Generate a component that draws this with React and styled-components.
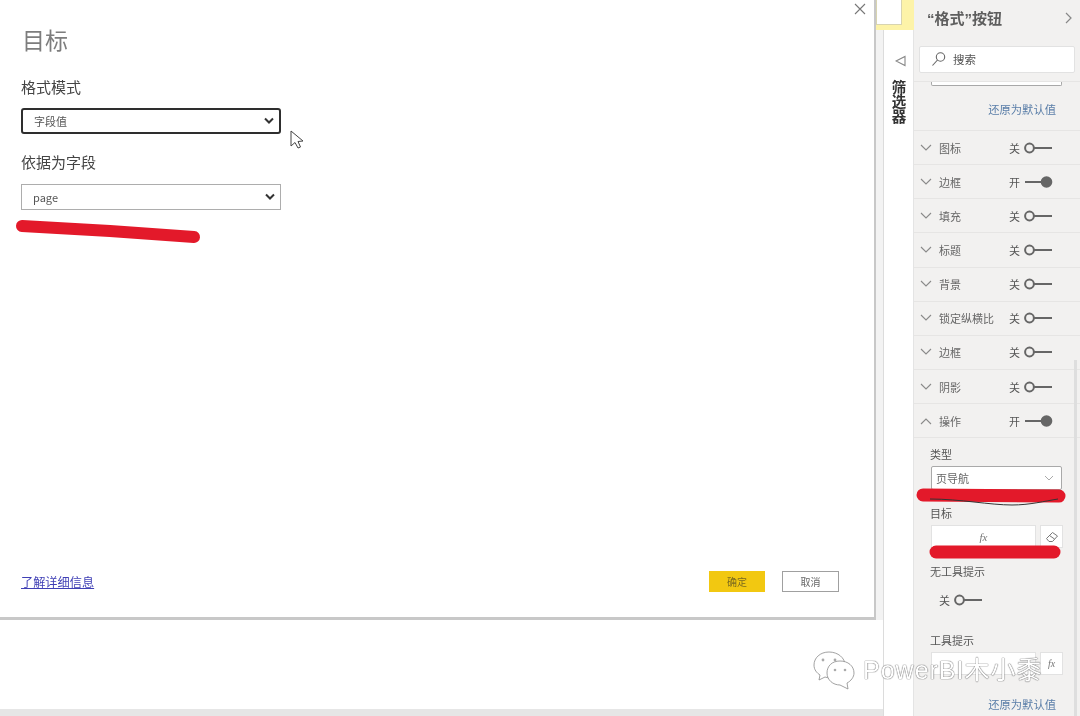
import React from "react";
import styled, { createGlobalStyle } from "styled-components";

const Global = createGlobalStyle`
  html, body { margin: 0; padding: 0; background: #fff; }
  * { box-sizing: border-box; }
  body { font-family: "Noto Sans CJK SC", "Liberation Sans", sans-serif; }
`;

const Page = styled.div`
  position: relative;
  width: 1080px;
  height: 716px;
  overflow: hidden;
  display: flex;
  background: #fff;
  filter: blur(0.5px);
`;

const Canvas = styled.div`
  width: 884px;
  display: flex;
  flex-direction: column;
  border-right: 1px solid #dcdcdc;
`;

const CanvasTop = styled.div`
  height: 620px;
  display: flex;
  background: #f0f0f0;
`;

const Modal = styled.div`
  position: relative;
  width: 876px;
  height: 620px;
  background: #fff;
  border-right: 2px solid #c8c8c8;
  border-bottom: 3px solid #c8c8c8;
  padding: 23px 0 0 21px;
`;

const CloseBtn = styled.svg`
  position: absolute;
  top: 2px;
  right: 7px;
`;

const DialogTitle = styled.h1`
  margin: 0 0 0 1px;
  font-size: 23px;
  line-height: 33px;
  font-weight: 400;
  color: #7d7d7d;
`;

const FieldLabel = styled.div`
  margin-top: ${(p) => p.$top}px;
  font-size: 15px;
  line-height: 22px;
  color: #444;
`;

const DialogSelect = styled.div`
  margin-top: ${(p) => p.$top}px;
  width: 260px;
  height: 26px;
  display: flex;
  align-items: center;
  justify-content: space-between;
  padding: 0 4px 0 11px;
  font-size: 11px;
  color: #555;
  background: #fff;
  border: ${(p) => (p.$focus ? "2px solid #2e2e2e" : "1px solid #adadad")};
  border-radius: ${(p) => (p.$focus ? "3px" : "0")};
`;

const DialogFooter = styled.div`
  position: absolute;
  left: 21px;
  right: 35px;
  top: 571px;
  display: flex;
  align-items: center;
  gap: 17px;
`;

const LearnMore = styled.a`
  margin-right: auto;
  font-size: 12.2px;
  line-height: 20px;
  color: #3f3fb5;
  text-decoration: underline;
`;

const DialogButton = styled.div`
  width: ${(p) => p.$w}px;
  height: 21px;
  display: flex;
  align-items: center;
  justify-content: center;
  font-size: 10px;
  color: ${(p) => (p.$primary ? "#7a6a20" : "#666")};
  background: ${(p) => (p.$primary ? "#f2c811" : "#fff")};
  border: ${(p) => (p.$primary ? "none" : "1px solid #a0a0a0")};
`;

const Gutter = styled.div`
  flex: 1;
  background: #f3f3f3;
`;

const CanvasBottom = styled.div`
  flex: 1;
  background: #fff;
  display: flex;
  flex-direction: column;
  justify-content: flex-end;
`;

const HScroll = styled.div`
  height: 7px;
  background: #e6e6e6;
`;

const FilterStrip = styled.div`
  width: 30px;
  display: flex;
  flex-direction: column;
  align-items: center;
  padding-top: 55px;
  background: #fff;
  border-right: 1px solid #e4e4e4;
`;

const FunnelIcon = styled.svg`
  margin-left: 3px;
`;

const FilterText = styled.div`
  writing-mode: vertical-rl;
  margin-top: 13px;
  font-size: 14.5px;
  line-height: 16px;
  font-weight: 700;
  color: #333;
`;

const YellowTab = styled.div`
  position: absolute;
  left: 876px;
  top: 0;
  width: 38px;
  height: 30px;
  background: #fdf3a8;
`;

const WhiteTab = styled.div`
  width: 26px;
  height: 25px;
  background: #fff;
  border: 1px solid #d8d4b0;
  border-top: none;
`;

const Pane = styled.div`
  position: relative;
  flex: 1;
  background: #f2f1f0;
  display: flex;
  flex-direction: column;
`;

const PaneHead = styled.div`
  height: 46px;
  padding: 8px 6px 0 13px;
  display: flex;
  align-items: flex-start;
  justify-content: space-between;
`;

const PaneTitle = styled.div`
  font-family: "Liberation Sans", "Noto Sans CJK SC", sans-serif;
  font-size: 15px;
  line-height: 21px;
  font-weight: 700;
  color: #5e5e5e;
`;

const SearchBox = styled.div`
  margin-left: 5px;
  width: 156px;
  height: 27px;
  display: flex;
  align-items: center;
  gap: 6px;
  padding: 0 0 2px 11px;
  font-size: 11.5px;
  color: #555;
  background: #fff;
  border: 1px solid #e2e2e2;
  border-radius: 2px;
`;

const Divider = styled.div`
  margin-top: 8px;
  height: 1px;
  background: #e6e5e4;
`;

const ClippedField = styled.div`
  margin-left: 17px;
  width: 131px;
  height: 4px;
  background: #fff;
  border: 1px solid #a8a8a8;
  border-top: none;
  border-radius: 0 0 2px 2px;
`;

const ResetLink = styled.div`
  margin-top: ${(p) => p.$top}px;
  padding-right: 24px;
  text-align: right;
  font-size: 11.3px;
  line-height: 16px;
  color: #5a7ea8;
`;

const RowList = styled.div`
  margin-top: 13px;
  border-top: 1px solid #e6e5e4;
`;

const Row = styled.div`
  height: 34.15px;
  display: flex;
  align-items: center;
  padding-left: 5px;
  border-bottom: 1px solid #e6e5e4;
`;

const RowChevron = styled.svg`
  flex: none;
  margin-right: 6px;
`;

const RowLabel = styled.div`
  width: 70px;
  font-size: 11px;
  white-space: nowrap;
  color: #666;
`;

const ToggleWrap = styled.div`
  display: flex;
  align-items: center;
  font-size: 11px;
  color: #555;
`;

const ToggleTrack = styled.svg`
  margin-left: 3px;
`;

const Section = styled.div`
  padding: 8px 0 0 17px;
`;

const SectionLabel = styled.div`
  margin: ${(p) => p.$top || 0}px 0 0 -1px;
  font-size: 11px;
  line-height: 16px;
  color: #555;
`;

const PaneSelect = styled.div`
  margin-top: 4px;
  width: 131px;
  height: 24px;
  display: flex;
  align-items: center;
  justify-content: space-between;
  padding: 0 7px 0 4px;
  font-size: 11px;
  color: #666;
  background: #fff;
  border: 1px solid #a9a9a9;
  border-radius: 2px;
`;

const FxRow = styled.div`
  margin-top: 4px;
  display: flex;
  gap: 4px;
`;

const FxField = styled.div`
  width: 105px;
  height: 23px;
  display: flex;
  align-items: center;
  justify-content: center;
  font-family: "Liberation Serif", serif;
  font-style: italic;
  font-size: 11px;
  color: #777;
  background: #fff;
  border: 1px solid #e2e2e2;
`;

const FxButton = styled.div`
  width: 23px;
  height: 23px;
  display: flex;
  align-items: center;
  justify-content: center;
  font-family: "Liberation Serif", serif;
  font-style: italic;
  font-size: 10px;
  color: #777;
  background: #fff;
  border: 1px solid #e2e2e2;
`;

const IndentToggle = styled.div`
  margin: 13px 0 0 8px;
  height: 16px;
  display: flex;
`;

const PaneScroll = styled.div`
  position: absolute;
  left: 160px;
  top: 360px;
  bottom: 0;
  width: 3px;
  background: #dedede;
`;

const Scribble = styled.svg`
  position: absolute;
  left: 0;
  top: 0;
  pointer-events: none;
`;

const Watermark = styled.div`
  position: absolute;
  left: 813px;
  top: 650px;
  display: flex;
  align-items: center;
  gap: 6px;
  color: #fff;
  font-family: "Liberation Sans", "Noto Sans CJK SC", sans-serif;
  font-size: 25px;
  line-height: 36px;
  letter-spacing: 1px;
  white-space: nowrap;
  text-shadow: 0 0 1px #555, 0 0 1px #555;
`;

const Chevron = ({ up }) => (
  <RowChevron width="14" height="10" viewBox="0 0 14 10" fill="none" stroke="#8a8a8a" strokeWidth="1.1">
    <path d={up ? "M2 8 L7 3 L12 8" : "M2 2 L7 7 L12 2"} />
  </RowChevron>
);

const Toggle = ({ on }) => (
  <ToggleWrap>
    {on ? "开" : "关"}
    <ToggleTrack width="32" height="14" viewBox="0 0 32 14">
      {on ? (
        <>
          <line x1="2" y1="7" x2="20" y2="7" stroke="#666" strokeWidth="2" />
          <circle cx="23.5" cy="7" r="5.8" fill="#666" />
        </>
      ) : (
        <>
          <circle cx="6.5" cy="7" r="4.4" fill="none" stroke="#666" strokeWidth="2" />
          <line x1="11" y1="7" x2="29" y2="7" stroke="#666" strokeWidth="2" />
        </>
      )}
    </ToggleTrack>
  </ToggleWrap>
);

const SelectArrow = () => (
  <svg width="12" height="8" viewBox="0 0 12 8" fill="none" stroke="#333" strokeWidth="2">
    <path d="M2 1.5 L6 5.5 L10 1.5" />
  </svg>
);

const rows = [
  ["图标", false],
  ["边框", true],
  ["填充", false],
  ["标题", false],
  ["背景", false],
  ["锁定纵横比", false],
  ["边框", false],
  ["阴影", false],
];

export default function App() {
  return (
    <Page>
      <Global />
      <Canvas>
        <CanvasTop>
          <Modal>
            <CloseBtn width="14" height="14" viewBox="0 0 14 14" stroke="#777" strokeWidth="1.1">
              <path d="M2 2 L12 12 M12 2 L2 12" />
            </CloseBtn>
            <DialogTitle>目标</DialogTitle>
            <FieldLabel $top={20}>格式模式</FieldLabel>
            <DialogSelect $top={10} $focus>
              字段值
              <SelectArrow />
            </DialogSelect>
            <FieldLabel $top={17}>依据为字段</FieldLabel>
            <DialogSelect $top={11}>
              page
              <SelectArrow />
            </DialogSelect>
            <DialogFooter>
              <LearnMore>了解详细信息</LearnMore>
              <DialogButton $primary $w={56}>确定</DialogButton>
              <DialogButton $w={57}>取消</DialogButton>
            </DialogFooter>
          </Modal>
          <Gutter />
        </CanvasTop>
        <CanvasBottom>
          <HScroll />
        </CanvasBottom>
      </Canvas>

      <FilterStrip>
        <FunnelIcon width="11" height="12" viewBox="0 0 11 12" fill="none" stroke="#888" strokeWidth="1.1">
          <path d="M1 6 L10 1.5 L10 10.5 Z" />
        </FunnelIcon>
        <FilterText>筛选器</FilterText>
      </FilterStrip>

      <YellowTab>
        <WhiteTab />
      </YellowTab>

      <Pane>
        <PaneHead>
          <PaneTitle>“格式”按钮</PaneTitle>
          <svg width="10" height="14" viewBox="0 0 10 14" fill="none" stroke="#888" strokeWidth="1.2" style={{ marginTop: 3 }}>
            <path d="M2 2 L7 7 L2 12" />
          </svg>
        </PaneHead>
        <SearchBox>
          <svg width="16" height="16" viewBox="0 0 16 16" fill="none" stroke="#666" strokeWidth="1.1">
            <circle cx="9.5" cy="6" r="4.2" />
            <path d="M6.5 9 L1.5 14.5" />
          </svg>
          搜索
        </SearchBox>
        <Divider />
        <ClippedField />
        <ResetLink $top={15}>还原为默认值</ResetLink>
        <RowList>
          {rows.map(([label, on], i) => (
            <Row key={i}>
              <Chevron />
              <RowLabel>{label}</RowLabel>
              <Toggle on={on} />
            </Row>
          ))}
          <Row>
            <Chevron up />
            <RowLabel>操作</RowLabel>
            <Toggle on />
          </Row>
        </RowList>
        <Section>
          <SectionLabel>类型</SectionLabel>
          <PaneSelect>
            页导航
            <svg width="10" height="7" viewBox="0 0 10 7" fill="none" stroke="#aaa" strokeWidth="1">
              <path d="M1 1 L5 5 L9 1" />
            </svg>
          </PaneSelect>
          <SectionLabel $top={15}>目标</SectionLabel>
          <FxRow>
            <FxField>fx</FxField>
            <FxButton>
              <svg width="14" height="14" viewBox="0 0 14 14" fill="none" stroke="#777" strokeWidth="1">
                <path d="M1.5 8.5 L7.5 2.5 L12.5 6 L7.5 11.5 L4 11.5 Z M4.5 5.5 L9.5 9" />
              </svg>
            </FxButton>
          </FxRow>
          <SectionLabel $top={15}>无工具提示</SectionLabel>
          <IndentToggle>
            <Toggle />
          </IndentToggle>
          <SectionLabel $top={24}>工具提示</SectionLabel>
          <FxRow>
            <FxField />
            <FxButton>fx</FxButton>
          </FxRow>
        </Section>
        <ResetLink $top={21}>还原为默认值</ResetLink>
        <PaneScroll />
      </Pane>

      <Scribble width="1080" height="716" viewBox="0 0 1080 716" fill="none">
        <path d="M22 226 L110 231 L194 237" stroke="#e3192a" strokeWidth="12" strokeLinecap="round" />
        <path d="M923 495 L1059 496" stroke="#e3192a" strokeWidth="13" strokeLinecap="round" />
        <path d="M930 499 C960 499 990 505 1012 505 C1030 505 1045 501 1058 499" stroke="#333" strokeWidth="1" />
        <path d="M936 552 L1054 552" stroke="#e3192a" strokeWidth="13" strokeLinecap="round" />
        <path d="M291 131 L291 146 L295 142.5 L298 148 L300.5 147 L298 141.5 L303 141 Z" fill="#fff" stroke="#444" strokeWidth="1" />
      </Scribble>

      <Watermark>
        <svg width="44" height="40" viewBox="0 0 44 40" fill="#fff" stroke="#8a8a8a" strokeWidth="0.8">
          <path d="M16 2 C7 2 1 8 1 15 C1 20 4 23 7 25 L6 30 L12 27 C15 28 18 28 20 28 C28 28 32 22 32 15 C32 8 25 2 16 2 Z" />
          <path d="M27 11 C19 11 14 16 14 23 C14 30 20 35 27 35 L35 39 L34 33 C38 31 41 27 41 23 C41 16 35 11 27 11 Z" />
          <circle cx="10" cy="10" r="1.4" fill="#aaa" stroke="none" />
          <circle cx="22" cy="10" r="1.4" fill="#aaa" stroke="none" />
          <circle cx="22" cy="20" r="1.3" fill="#aaa" stroke="none" />
          <circle cx="32" cy="20" r="1.3" fill="#aaa" stroke="none" />
        </svg>
        PowerBI木小黍
      </Watermark>
    </Page>
  );
}
